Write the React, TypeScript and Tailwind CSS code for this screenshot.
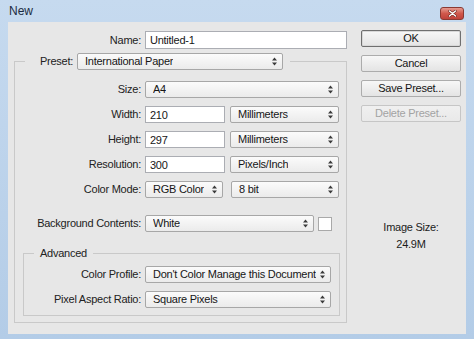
import type { ReactNode } from 'react';

// Photoshop "New" document dialog, Windows 7 frame

function Arrows() {
    return (
        <svg width="5" height="9" viewBox="0 0 5 9" className="shrink-0">
            <path d="M2.5 0.5 L5 3.5 H0 Z M0 5.5 H5 L2.5 8.5 Z" fill="#3a3a3a" />
        </svg>
    );
}

function Select({ value, className = '' }: { value: string; className?: string }) {
    return (
        <div className={`flex h-[17px] shrink-0 items-center justify-between rounded-[2px] border border-[#a7a7a7] bg-linear-to-b from-[#fbfbfb] to-[#ebebeb] pl-[7px] pr-[5px] text-[#161616] ${className}`}>
            <span className="truncate">{value}</span>
            <Arrows />
        </div>
    );
}

function TextField({ value, className = '' }: { value: string; className?: string }) {
    return (
        <input
            readOnly
            defaultValue={value}
            className={`h-[17px] shrink-0 border border-[#abadb3] bg-white pl-[4px] text-[#161616] outline-none ${className}`}
        />
    );
}

function Row({ label, labelWidth, children }: { label: string; labelWidth: string; children: ReactNode }) {
    return (
        <div className="flex items-center gap-[4px]">
            <span className={`shrink-0 text-right text-[#222] ${labelWidth}`}>{label}</span>
            {children}
        </div>
    );
}

function Button({ label, primary, disabled }: { label: string; primary?: boolean; disabled?: boolean }) {
    let cls = 'border-[#acacac] from-[#f7f7f7] to-[#e4e4e4] text-[#161616]';
    if (primary) cls = 'border-[#6f6f6f] from-[#f7f7f7] to-[#e4e4e4] text-[#161616] shadow-[inset_0_0_0_1px_#d8d8d8]';
    if (disabled) cls = 'border-[#c6c6c6] from-[#f0f0f0] to-[#e9e9e9] text-[#a3a3a3]';
    return (
        <div className={`flex h-[17px] w-[100px] items-center justify-center rounded-[2px] border bg-linear-to-b ${cls}`}>
            {label}
        </div>
    );
}

export default function App() {
    return (
        <div className="flex h-[339px] w-[474px] flex-col bg-linear-to-b from-[#c6daef] to-[#b3cce7] font-['Liberation_Sans',Arial,sans-serif] text-[11px] leading-[13px] tracking-[-0.25px]">
            {/* title bar */}
            <div className="flex h-[22px] shrink-0 items-start justify-between pl-[9px] pr-[10px]">
                <span className="mt-[5px] text-[12px] tracking-normal text-[#1b2a40]">New</span>
                <div className="mt-[7px] flex h-[13px] w-[24px] items-center justify-center rounded-[3px] border border-[#8a3a33] bg-linear-to-b from-[#e59a91] via-[#d0584c] to-[#c0413a]">
                    <svg width="9" height="7" viewBox="0 0 9 7">
                        <path d="M1.5 1 L7.5 6 M7.5 1 L1.5 6" stroke="#6b1f1a" strokeWidth="2.6" strokeLinecap="round" />
                        <path d="M1.5 1 L7.5 6 M7.5 1 L1.5 6" stroke="#ffffff" strokeWidth="1.5" strokeLinecap="round" />
                    </svg>
                </div>
            </div>

            {/* client area */}
            <div className="mx-[8px] mb-[5px] flex flex-1 gap-[14px] bg-[#e7e7e7]">
                <div className="flex w-[339px] shrink-0 flex-col pt-[9px]">
                    <Row label="Name:" labelWidth="w-[133px]">
                        <TextField value="Untitled-1" className="h-[18px] w-[202px]" />
                    </Row>

                    <fieldset className="ml-[6px] mt-[4px] w-[333px] border border-[#c9c9c9] pb-[6px]">
                        <legend className="ml-[10px] pr-[7px]">
                            <div className="flex items-center gap-[4px]">
                                <span className="w-[48px] text-right text-[#222]">Preset:</span>
                                <Select value="International Paper" className="w-[206px]" />
                            </div>
                        </legend>

                        <div className="flex flex-col gap-[8px] pt-[11px]">
                            <Row label="Size:" labelWidth="w-[126px]">
                                <Select value="A4" className="w-[194px]" />
                            </Row>
                            <Row label="Width:" labelWidth="w-[126px]">
                                <div className="flex gap-[5px]">
                                    <TextField value="210" className="w-[80px]" />
                                    <Select value="Millimeters" className="w-[109px]" />
                                </div>
                            </Row>
                            <Row label="Height:" labelWidth="w-[126px]">
                                <div className="flex gap-[5px]">
                                    <TextField value="297" className="w-[80px]" />
                                    <Select value="Millimeters" className="w-[109px]" />
                                </div>
                            </Row>
                            <Row label="Resolution:" labelWidth="w-[126px]">
                                <div className="flex gap-[5px]">
                                    <TextField value="300" className="w-[80px]" />
                                    <Select value="Pixels/Inch" className="w-[109px]" />
                                </div>
                            </Row>
                            <Row label="Color Mode:" labelWidth="w-[126px]">
                                <div className="flex gap-[8px]">
                                    <Select value="RGB Color" className="w-[78px]" />
                                    <Select value="8 bit" className="w-[108px]" />
                                </div>
                            </Row>
                            <div className="mt-[9px]">
                                <Row label="Background Contents:" labelWidth="w-[126px]">
                                    <div className="flex items-center gap-[4px]">
                                        <Select value="White" className="w-[169px]" />
                                        <div className="h-[14px] w-[14px] border border-[#a9a9a9] bg-white" />
                                    </div>
                                </Row>
                            </div>
                        </div>

                        <fieldset className="ml-[8px] mr-[6px] mt-[15px] border border-[#c9c9c9] pb-[7px]">
                            <legend className="ml-[10px] px-[6px] text-[#222]">Advanced</legend>
                            <div className="flex flex-col gap-[8px] pt-[6px]">
                                <Row label="Color Profile:" labelWidth="w-[117px]">
                                    <Select value="Don't Color Manage this Document" className="w-[186px]" />
                                </Row>
                                <Row label="Pixel Aspect Ratio:" labelWidth="w-[117px]">
                                    <Select value="Square Pixels" className="w-[186px]" />
                                </Row>
                            </div>
                        </fieldset>
                    </fieldset>
                </div>

                <div className="flex flex-col pt-[8px]">
                    <div className="flex flex-col gap-[8px]">
                        <Button label="OK" primary />
                        <Button label="Cancel" />
                        <Button label="Save Preset..." />
                        <Button label="Delete Preset..." disabled />
                    </div>
                    <div className="mt-[97px] w-[100px] text-center leading-[17px] text-[#1c1c1c]">
                        <div>Image Size:</div>
                        <div>24.9M</div>
                    </div>
                </div>
            </div>
        </div>
    );
}
